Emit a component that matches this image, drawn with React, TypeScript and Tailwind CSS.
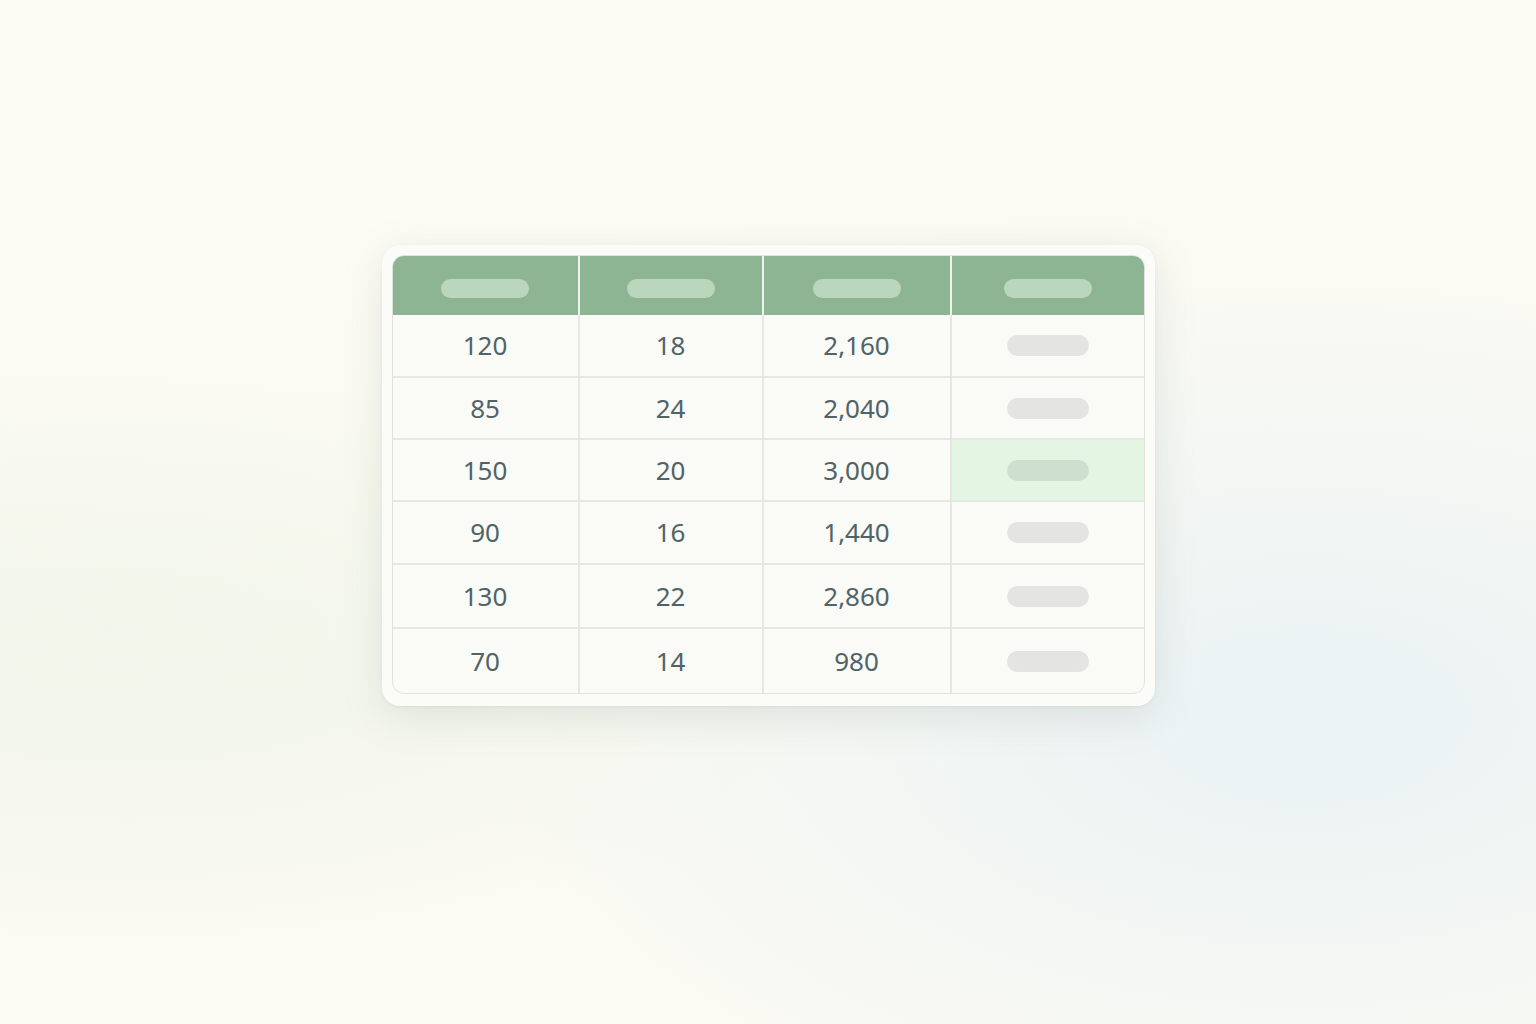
import React from "react";

const rows: [string, string, string][] = [
  ["120", "18", "2,160"],
  ["85", "24", "2,040"],
  ["150", "20", "3,000"],
  ["90", "16", "1,440"],
  ["130", "22", "2,860"],
  ["70", "14", "980"],
];

const rowHeights = ["h-[61px]", "h-[62px]", "h-[62px]", "h-[63px]", "h-[64px]", "h-[66px]"];

export default function App() {
  return (
    <div
      className="relative w-[1536px] h-[1024px] overflow-hidden bg-[#fbfaf3]"
      style={{ fontFamily: '"Noto Sans", "Open Sans", sans-serif' }}
    >
      <div className="absolute inset-0 bg-[radial-gradient(ellipse_at_85%_70%,#eaf2f4_0%,rgba(234,242,244,0)_45%)]" />
      <div className="absolute inset-0 bg-[radial-gradient(ellipse_at_8%_60%,#eff4e8_0%,rgba(239,244,232,0)_40%)]" />
      <div className="absolute inset-0 bg-[radial-gradient(ellipse_at_15%_5%,#fdfcf4_0%,rgba(253,252,244,0)_50%)]" />
      <div className="relative flex h-full w-full items-start justify-center pt-[245px]">
        <div className="w-[773px] rounded-[18px] bg-[#fbfbf7] p-[10px] pb-[12px] shadow-[0_10px_40px_rgba(120,140,130,0.18),0_1px_3px_rgba(120,140,130,0.12)]">
          <div className="overflow-hidden rounded-[12px] border border-[#e2e2dd] bg-[#fafaf6]">
            <div className="flex h-[59px] bg-[#8db594]">
              {["w-[187px]", "w-[184px]", "w-[188px]", "flex-1"].map((w, i) => (
                <div
                  key={i}
                  className={`${w} flex items-center justify-center pt-[5px] ${i < 3 ? "border-r-2 border-[#eef3ee]" : ""}`}
                >
                  <div className="h-[19px] w-[88px] rounded-full bg-[#bad6bd]" />
                </div>
              ))}
            </div>
            {rows.map((r, ri) => (
              <div
                key={ri}
                className={`flex ${rowHeights[ri]} ${ri > 0 ? "border-t-2 border-[#e6e6e2]" : ""}`}
              >
                <div className="flex w-[187px] items-center justify-center border-r-2 border-[#e6e6e2] text-[26px] text-[#506367]">
                  {r[0]}
                </div>
                <div className="flex w-[184px] items-center justify-center border-r-2 border-[#e6e6e2] text-[26px] text-[#506367]">
                  {r[1]}
                </div>
                <div className="flex w-[188px] items-center justify-center border-r-2 border-[#e6e6e2] text-[26px] text-[#506367]">
                  {r[2]}
                </div>
                <div
                  className={`flex flex-1 items-center justify-center ${ri === 2 ? "bg-[#e5f5e3]" : ""}`}
                >
                  <div
                    className={`h-[21px] w-[82px] rounded-full ${ri === 2 ? "bg-[#cde0d0]" : "bg-[#e4e4e3]"}`}
                  />
                </div>
              </div>
            ))}
          </div>
        </div>
      </div>
    </div>
  );
}
